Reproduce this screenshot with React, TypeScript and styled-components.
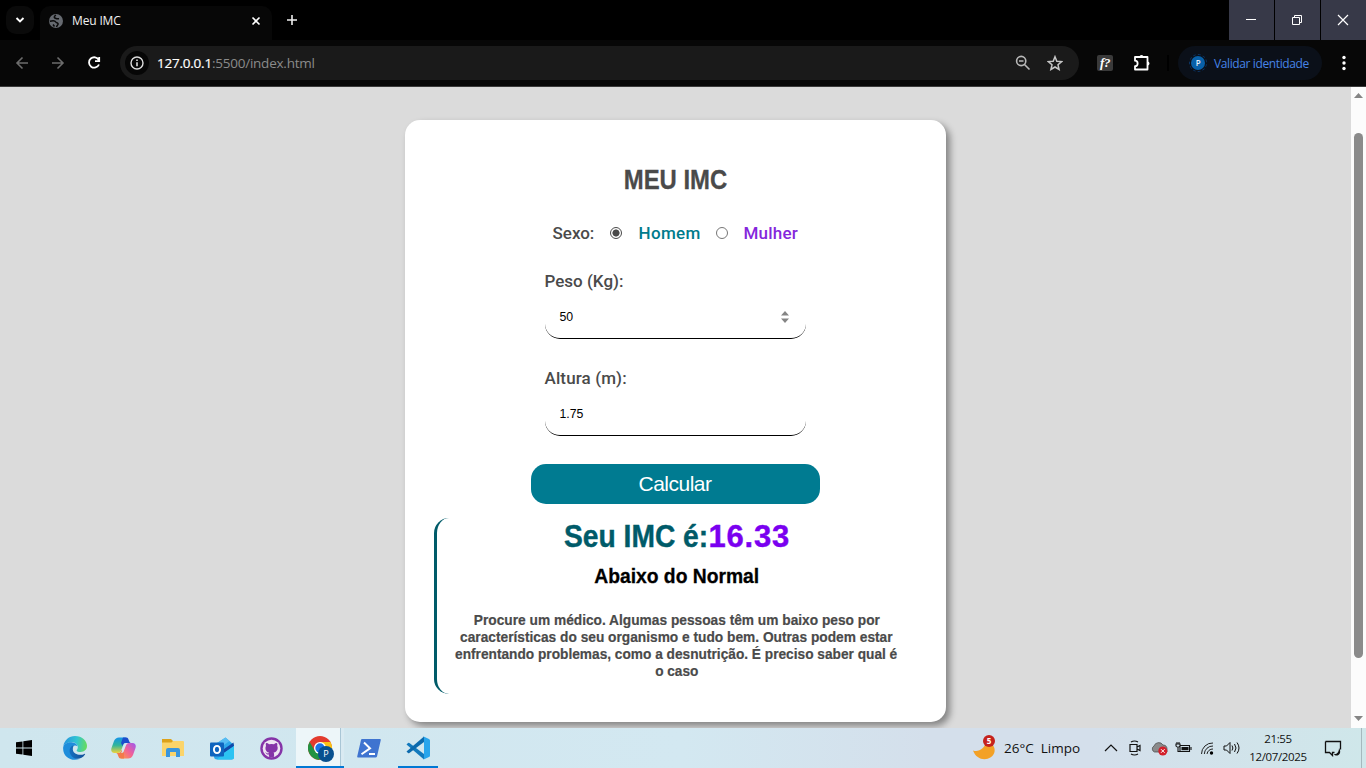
import React from "react";
import styled, { createGlobalStyle } from "styled-components";

const Global = createGlobalStyle`
  * { box-sizing: border-box; }
  body { margin: 0; overflow: hidden; font-family: "Open Sans", "Noto Sans", sans-serif; }
  svg { display: block; flex: none; }
`;

const Screen = styled.div`
  width: 1366px;
  height: 768px;
  display: flex;
  flex-direction: column;
  overflow: hidden;
`;

/* ---------- browser chrome ---------- */
const TabStrip = styled.div`
  height: 40px;
  flex: none;
  background: #000;
  display: flex;
  padding-left: 6px;
`;
const TabSearch = styled.div`
  width: 28px;
  height: 28px;
  margin-top: 6px;
  border-radius: 10px;
  background: #0a0a0a;
  display: flex;
  align-items: center;
  justify-content: center;
`;
const Tab = styled.div`
  width: 232px;
  height: 34px;
  margin: 6px 0 0 6px;
  border-radius: 10px 10px 0 0;
  background: #070707;
  display: flex;
  align-items: center;
  padding: 0 9px 5px 8px;
  color: #f0f0f0;
`;
const TabTitle = styled.span`
  flex: 1;
  margin-left: 8px;
  font-size: 12px;
  letter-spacing: -0.15px;
`;
const NewTab = styled.div`
  display: flex;
  align-items: center;
  padding-left: 14px;
`;
const WindowButtons = styled.div`
  margin-left: auto;
  display: flex;
  gap: 1px;
`;
const WindowButton = styled.div`
  width: 45px;
  height: 40px;
  background: #373948;
  display: flex;
  align-items: center;
  justify-content: center;
  padding-right: 2px;
`;
const Toolbar = styled.div`
  height: 47px;
  flex: none;
  background: #070707;
  border-bottom: 1px solid #3a3a3a;
  display: flex;
  align-items: center;
  padding: 0 14px;
`;
const NavIcons = styled.div`
  display: flex;
  gap: 20px;
  width: 106px;
`;
const AddressBar = styled.div`
  width: 959px;
  height: 34px;
  border-radius: 17px;
  background: #1a1a1a;
  display: flex;
  align-items: center;
  padding: 0 16px 0 5px;
`;
const SiteInfo = styled.div`
  width: 24px;
  height: 24px;
  border-radius: 50%;
  background: #060606;
  display: flex;
  align-items: center;
  justify-content: center;
`;
const Url = styled.span`
  flex: 1;
  margin-left: 8px;
  font-size: 13.5px;
  letter-spacing: -0.23px;
  color: #8b8b8b;
`;
const Host = styled.span`
  color: #fff;
  -webkit-text-stroke: 0.2px #fff;
`;
const Extension = styled.div`
  width: 16px;
  height: 16px;
  margin-left: 18px;
  border-radius: 2px;
  background: #3a3a3a;
  color: #fff;
  font: italic bold 13px/15px "Liberation Serif", serif;
  text-align: center;
  letter-spacing: -0.5px;
`;
const Divider = styled.div`
  width: 2px;
  height: 16px;
  margin: 0 9px 0 16px;
  background: #000;
`;
const Profile = styled.div`
  width: 144px;
  height: 34px;
  border-radius: 17px;
  background: #0b1019;
  display: flex;
  align-items: center;
  padding-left: 11px;
  color: #4684e8;
  font-size: 12px;
  letter-spacing: -0.38px;
  white-space: nowrap;
`;
const Avatar = styled.div`
  width: 18px;
  height: 18px;
  margin-right: 7px;
  border: 1px dashed #0b3668;
  border-radius: 50%;
  padding: 1px;
`;
const AvatarLetter = styled.div`
  width: 14px;
  height: 14px;
  border-radius: 50%;
  background: #0860a8;
  color: #e4eefa;
  font-size: 8px;
  font-weight: 600;
  line-height: 14px;
  text-align: center;
`;

/* ---------- page ---------- */
const Viewport = styled.div`
  height: 641px;
  flex: none;
  display: flex;
  overflow: hidden;
`;
const Page = styled.main`
  width: 1351px;
  background: #dbdbdb;
  display: flex;
  justify-content: center;
  align-items: flex-start;
  padding-top: 33px;
  overflow: hidden;
`;
const Card = styled.section`
  width: 541px;
  height: 602px;
  border-radius: 15px;
  background: #fff;
  box-shadow: 4px 4px 7px rgba(0, 0, 0, 0.4);
  display: flex;
  flex-direction: column;
  align-items: center;
  padding: 45px 30px 0 29px;
  font-family: "Liberation Sans", Arial, sans-serif;
  color: #4a4a4a;
`;
const Fit = styled.span<{ $x: number }>`
  display: block;
  white-space: nowrap;
  transform: scaleX(${(p) => p.$x});
`;
const Title = styled.h1`
  margin: 0;
  font-size: 27px;
  line-height: 30px;
  -webkit-text-stroke: 0.3px #4a4a4a;
`;
const GenderRow = styled.div`
  height: 20px;
  margin: 28px 0 0;
  width: 245px;
  display: flex;
  align-items: center;
`;
const Label = styled.span<{ $w: number; $color?: string; $ls?: number }>`
  width: ${(p) => p.$w}px;
  flex: none;
  font: 500 17px/20px Roboto, sans-serif;
  letter-spacing: ${(p) => p.$ls ?? 0}px;
  color: ${(p) => p.$color ?? "#4a4a4a"};
  white-space: nowrap;
`;
const Radio = styled.span<{ $on?: boolean; $gap: number }>`
  width: 12px;
  height: 12px;
  flex: none;
  margin-right: ${(p) => p.$gap}px;
  border: 1px solid ${(p) => (p.$on ? "#4a4a4a" : "#767676")};
  border-radius: 50%;
  background: ${(p) => (p.$on ? "radial-gradient(circle, #4a4a4a 3.2px, #fff 3.9px)" : "#fff")};
`;
const Field = styled.div<{ $top: number }>`
  width: 261px;
  margin-top: ${(p) => p.$top}px;
  display: flex;
  flex-direction: column;
`;
const Input = styled.div`
  height: 43px;
  margin-top: 5px;
  border-bottom: 1px solid #000;
  border-radius: 15px;
  display: flex;
  align-items: center;
  justify-content: space-between;
  padding: 0 14px 0 15px;
  font-size: 12.3px;
  color: #000;
`;
const Submit = styled.div`
  width: 289px;
  height: 40px;
  margin-top: 28px;
  border-radius: 15px;
  background: #007b91;
  color: #fff;
  font-size: 21px;
  line-height: 40px;
  text-align: center;
  letter-spacing: -0.5px;
`;
const Result = styled.div`
  width: 482px;
  height: 176px;
  margin-top: 14px;
  border-left: 3px solid #005b69;
  border-radius: 15px;
  display: flex;
  flex-direction: column;
  align-items: center;
  font-weight: bold;
`;
const Score = styled.div`
  display: flex;
  width: 226px;
  height: 38px;
  font-size: 31px;
  line-height: 38px;
  color: #005b69;
`;
const ScoreLabel = styled.span`
  width: 145px;
  white-space: nowrap;
  -webkit-text-stroke: 0.4px #005b69;
  & > span { transform-origin: 0 50%; }
`;
const ScoreValue = styled.span`
  color: #7a00f0;
  letter-spacing: 0.8px;
  -webkit-text-stroke: 0.4px #7a00f0;
`;
const Category = styled.div`
  margin-top: 8px;
  font-size: 20.5px;
  line-height: 24px;
  color: #000;
  -webkit-text-stroke: 0.3px #000;
`;
const Advice = styled.div`
  margin-top: 23px;
  display: flex;
  flex-direction: column;
  align-items: center;
  font-size: 15px;
  line-height: 17px;
  -webkit-text-stroke: 0.2px #4a4a4a;
`;
const Scrollbar = styled.div`
  width: 15px;
  background: #fcfcfc;
  display: flex;
  flex-direction: column;
  align-items: center;
  padding: 6px 0;
`;
const Thumb = styled.div`
  width: 9px;
  height: 525px;
  margin: 35px 0 58px;
  border-radius: 5px;
  background: #8b8b8b;
`;

/* ---------- taskbar ---------- */
const Taskbar = styled.div`
  height: 40px;
  flex: none;
  background: linear-gradient(90deg, #cfe6ee 0%, #d3e8f1 50%, #d4dfeb 68%, #d4dfeb 80%, #cfe7ea 100%);
  display: flex;
  color: #111;
`;
const AppButton = styled.div<{ $state?: "active" | "open"; $w?: number }>`
  width: ${(p) => p.$w ?? 49}px;
  height: 40px;
  display: flex;
  align-items: center;
  justify-content: center;
  background: ${(p) => (p.$state === "active" ? "linear-gradient(90deg, #edf6f9 44px, #a9c6d6 44px, #a9c6d6 45px, #d9eaf2 45px)" : "transparent")};
  box-shadow: ${(p) => (p.$state ? "inset 0 -2px #0078d4" : "none")};
`;
const ChromeIcon = styled.div`
  position: relative;
`;
const ProfileBadge = styled.div`
  position: absolute;
  left: 10px;
  top: 10px;
  width: 16px;
  height: 16px;
  border-radius: 50%;
  background: #07508f;
  color: #fff;
  font-size: 9px;
  line-height: 16px;
  text-align: center;
`;
const Tray = styled.div`
  margin-left: auto;
  display: flex;
  align-items: center;
`;
const Weather = styled.div`
  position: relative;
  width: 31px;
  height: 30px;
`;
const WeatherBadge = styled.div`
  position: absolute;
  left: 10px;
  top: 2px;
  width: 12px;
  height: 12px;
  border-radius: 50%;
  background: #c5221c;
  color: #fff;
  font-size: 8px;
  font-weight: 700;
  line-height: 12px;
  text-align: center;
`;
const WeatherText = styled.div`
  width: 95px;
  font-size: 13.5px;
  letter-spacing: 0;
  white-space: pre;
`;
const TrayIcon = styled.div`
  width: 24px;
  display: flex;
  justify-content: center;
`;
const Clock = styled.div`
  width: 70px;
  text-align: center;
  font-size: 11.5px;
  line-height: 18px;
  letter-spacing: -0.35px;
`;
const Notifications = styled.div`
  width: 49px;
  height: 40px;
  display: flex;
  align-items: center;
  justify-content: center;
  padding-right: 8px;
  border-right: 1px solid #a5b9be;
  margin-right: 4px;
`;

const line = { fill: "none", stroke: "#ddd", strokeWidth: 1.6 };

const Edge = () => (
  <svg width="24" height="24" viewBox="0 0 24 24">
    <defs>
      <linearGradient id="eg" x1="0" y1="0.4" x2="1" y2="0.5"><stop offset="0" stopColor="#2593de" /><stop offset=".55" stopColor="#31c5d2" /><stop offset="1" stopColor="#67dc5c" /></linearGradient>
      <linearGradient id="eb" x1="0" y1="0" x2="1" y2="0"><stop offset="0" stopColor="#1670c0" /><stop offset="1" stopColor="#124f97" /></linearGradient>
    </defs>
    <path d="M.3 10C1.500 4 6 0 12 0c7 0 12 5 12 9.800 0 4-3 6.200-6.200 6.200-3 0-4.500-.9-4.100-1.800C16 12 15 6.500 9 6.200 5 6 2 7.500.3 10Z" fill="url(#eg)" />
    <path d="M.2 11C1 8 4.500 6 8.500 6.200c3.500.1 5.500 2 6 4-3-1.700-6.300.3-6.300 4.300 0 5 4 8.500 8.300 8.500C8 26-.8 20.500.2 11Z" fill="#1e8ddb" />
    <path d="M9.500 9.800C5.800 11.500 5.500 17 9 20.500c3.500 3.500 9.500 3.200 13-2 .4-.6 0-.9-.6-.6-4 2-11 .9-11.600-4.400-.1-1.500.2-2.700.9-4Z" fill="url(#eb)" />
  </svg>
);
const Copilot = () => (
  <svg width="25" height="22" viewBox="0 0 25 22">
    <defs>
      <linearGradient id="c1" x1="0" y1="0" x2="0" y2="1"><stop offset="0" stopColor="#1494e8" /><stop offset=".5" stopColor="#30b59b" /><stop offset="1" stopColor="#efd33b" /></linearGradient>
      <linearGradient id="c2" x1="1" y1="0" x2="0" y2="1"><stop offset="0" stopColor="#9c59ef" /><stop offset=".5" stopColor="#f0609a" /><stop offset="1" stopColor="#ff9b45" /></linearGradient>
    </defs>
    <path d="M8 .5h7l-4.500 12Q9.500 16 7 16H3.500C.5 16-.3 13.500.5 11L3 4Q4.500.5 8 .5Z" fill="url(#c1)" />
    <path d="M12 .5h3.500c2.500 0 2.200 5.500 4.500 5.500h-5.500c-2 0-2.500 1.500-3 3L10 6Z" fill="#1b4dcc" />
    <path d="M17 21.500h-7l4.500-12Q15.500 6 18 6h3.500c3 0 3.800 2.500 3 5L22 18q-1.500 3.500-5 3.500Z" fill="url(#c2)" />
    <path d="M13 21.500H9.500C7 21.500 7.300 16 5 16h2.500c2 0 2.500-1.500 3-3L13 16Z" fill="#f27a4b" />
    <path d="m13.800 7-3.600 9h1.300l3.600-9Z" fill="#d6e9f1" />
  </svg>
);
const Folder = () => (
  <svg width="22" height="20" viewBox="0 0 22 20">
    <path d="M0 1h9l2 2h10v5H0Z" fill="#dda21b" />
    <path d="M11 3h10q1 0 1 1v14H0V4.500h9.500Z" fill="#fbd46a" />
    <path d="M4 19v-7q0-2 2-2h10q2 0 2 2v7h-4v-5H8v5Z" fill="#3a96dd" />
  </svg>
);
const Outlook = () => (
  <svg width="24" height="23" viewBox="0 0 24 23">
    <path d="M4 8 15.500.5 24 8v12q0 2.500-2.500 2.500H7Q4 22.500 4 19.500Z" fill="#2ea8ea" />
    <path d="m5 7.500 10.500-7 4 3.500-11 8-4-2Z" fill="#57bdf3" />
    <path d="M14 12 23.500 5.500 24 9 13 17Z" fill="#1249a8" />
    <path d="m13 16.500 11-7.500v11q0 2.500-2.500 2.500H7Z" fill="#2cc3f2" />
    <rect y="5.500" width="14" height="14" rx="1" fill="#0f64be" />
    <ellipse cx="7" cy="12.500" rx="3.100" ry="3.600" fill="none" stroke="#fff" strokeWidth="1.900" />
  </svg>
);
const Github = () => (
  <svg width="23" height="23" viewBox="0 0 23 23">
    <circle cx="11.500" cy="11.500" r="11.200" fill="#8534a8" />
    <circle cx="11.500" cy="11.500" r="8.800" fill="#eee5f2" />
    <path d="M6 6q2 0 3 1.200a10 10 0 0 1 5 0Q15 6 17 6q.7 1.500.2 3c1 1.500.8 6-3.700 6.500.6.600.6 1.200.6 4.300q-2.600.800-5.200 0v-2.300c-2 .5-2.500-.9-3-1.600l-.9-.7c1.300-.2 1.700 1.400 3 1.300q.7 0 1-1C5.200 15 5 10.500 6 9q-.5-1.500 0-3" fill="#8534a8" />
  </svg>
);
const Chrome = () => (
  <svg width="24" height="24" viewBox="0 0 24 24">
    <circle cx="12" cy="12" r="12" fill="#e33b2e" />
    <path d="M12 6h10.400A12 12 0 0 1 12 24l5-9Z" fill="#fbc116" />
    <path d="M1.600 6 7 15l5 3 3-1-4 7A12 12 0 0 1 1.600 6" fill="#229342" />
    <circle cx="12" cy="12" r="6" fill="#fff" />
    <circle cx="12" cy="12" r="4.700" fill="#1a73e8" />
  </svg>
);
const PowerShell = () => (
  <svg width="24" height="19" viewBox="0 0 24 19">
    <path d="M5 0h18q1 0 .8 1L20 17.500q-.3 1-1.500 1H1q-1 0-.8-1L4 1Q4.200 0 5 0" fill="#3f74d0" />
    <path d="m7 3.500 6 5.800-8.500 6M12 15h6" fill="none" stroke="#fff" strokeWidth="2" />
  </svg>
);
const VsCode = () => (
  <svg width="24" height="24" viewBox="0 0 24 24">
    <path d="M.5 8.500 2 7q.7-.4 1.400 0L18 18v5.500Z" fill="#1279bd" />
    <path d="M.5 15.500 2 17q.7.400 1.400 0L18 6V.5Z" fill="#0c6aad" />
    <path d="m17 .3 6 2.700q1 .5 1 1.500v15q0 1-1 1.500l-6 2.700q1-.2 1-2V2.300q0-1.500-1-2" fill="#29a5ec" />
  </svg>
);

const App: React.FC = () => (
  <Screen>
    <Global />
    <TabStrip>
      <TabSearch>
        <svg width="10" height="8" viewBox="0 0 10 8"><path d="m1.500 2 3.500 3.500L8.500 2" fill="none" stroke="#fff" strokeWidth="1.900" /></svg>
      </TabSearch>
      <Tab>
        <svg width="16" height="16" viewBox="0 0 16 16">
          <circle cx="8" cy="8" r="7" fill="#666a70" />
          <path d="M8 2.200C5.500 3.500 5.800 5 8 5.500c1.200.4 2 .2 3 .3M1.800 8.300C4 7.600 7 7.500 7.800 9c.5 1 2 .6 2.300 1.800.3 1.200-1.300 1.500-1.600 3.200M5 11.500l1.500 2" fill="none" stroke="#0a0a0a" strokeWidth="1.500" />
        </svg>
        <TabTitle>Meu IMC</TabTitle>
        <svg width="14" height="14" viewBox="0 0 14 14"><path d="m3.500 3.500 7 7m0-7-7 7" fill="none" stroke="#fff" strokeWidth="1.600" /></svg>
      </Tab>
      <NewTab>
        <svg width="12" height="12" viewBox="0 0 12 12"><path d="M6 1v10M1 6h10" stroke="#eee" strokeWidth="1.600" /></svg>
      </NewTab>
      <WindowButtons>
        <WindowButton><svg width="12" height="12" viewBox="0 0 12 12"><path d="M1 5.500h10" stroke="#fff" /></svg></WindowButton>
        <WindowButton><svg width="12" height="12" viewBox="0 0 12 12"><path d="M1.500 3.500h7v7h-7zM3.500 3.500v-2h7v7h-2" fill="none" stroke="#fff" /></svg></WindowButton>
        <WindowButton><svg width="12" height="12" viewBox="0 0 12 12"><path d="m1 1 10 10M11 1 1 11" stroke="#fff" strokeWidth="1.200" /></svg></WindowButton>
      </WindowButtons>
    </TabStrip>
    <Toolbar>
      <NavIcons>
        <svg width="16" height="16" viewBox="0 0 16 16"><path d="M14 8H3m5.500-5.500L3 8l5.500 5.500" {...line} stroke="#6c6c6c" /></svg>
        <svg width="16" height="16" viewBox="0 0 16 16"><path d="M2 8h11M7.500 2.500 13 8l-5.500 5.500" {...line} stroke="#6c6c6c" /></svg>
        <svg width="16" height="16" viewBox="0 0 16 16"><path d="M12.800 5A5.200 5.200 0 1 0 13 9.500M13.200 2v4.200H9" {...line} stroke="#fff" strokeWidth="1.800" /></svg>
      </NavIcons>
      <AddressBar>
        <SiteInfo>
          <svg width="14" height="14" viewBox="0 0 14 14"><circle cx="7" cy="7" r="6" {...line} strokeWidth="1.400" /><path d="M7 6.200v4M7 3.500V5" {...line} /></svg>
        </SiteInfo>
        <Url><Host>127.0.0.1</Host>:5500/index.html</Url>
        <svg width="16" height="16" viewBox="0 0 16 16"><circle cx="6.200" cy="6" r="4.600" {...line} stroke="#b8b8b8" /><path d="M4 6h4.500M9.500 9.500l5 5" {...line} stroke="#b8b8b8" /></svg>
        <svg width="16" height="16" viewBox="0 0 16 16" style={{ marginLeft: 16 }}><path d="m8 1.700 1.800 4.500 4.900.4-3.700 3.200 1.100 4.700L8 12l-4.100 2.500L5 9.800 1.300 6.600l4.900-.4Z" {...line} stroke="#c6c6c6" strokeWidth="1.500" /></svg>
      </AddressBar>
      <Extension>f?</Extension>
      <svg width="18" height="18" viewBox="0 0 18 18" style={{ marginLeft: 20 }}>
        <path d="M2 3h12.500v12.500H2v-3.300c3.500 0 3.500-5.500 0-5.500Z" {...line} stroke="#fff" strokeWidth="1.800" strokeLinejoin="round" />
        <path d="M6.500 3a2 2 0 0 1 4 0ZM14.500 7.500a2 2 0 0 1 0 4Z" fill="#fff" />
      </svg>
      <Divider />
      <Profile>
        <Avatar><AvatarLetter>P</AvatarLetter></Avatar>
        Validar identidade
      </Profile>
      <svg width="4" height="16" viewBox="0 0 4 16" style={{ marginLeft: 20 }}><g fill="#fff"><circle cx="2" cy="2.500" r="1.700" /><circle cx="2" cy="8" r="1.700" /><circle cx="2" cy="13.500" r="1.700" /></g></svg>
    </Toolbar>

    <Viewport>
      <Page>
        <Card>
          <Title><Fit $x={0.885}>MEU IMC</Fit></Title>
          <GenderRow>
            <Label $w={57}>Sexo:</Label>
            <Radio $on $gap={17} />
            <Label $w={77} $color="#007b8c" $ls={0.35}>Homem</Label>
            <Radio $gap={16} />
            <Label $w={54} $color="#8526dc" $ls={0.2}>Mulher</Label>
          </GenderRow>
          <Field $top={28}>
            <Label $w={200}>Peso (Kg):</Label>
            <Input>
              50
              <svg width="14" height="14" viewBox="0 0 14 14"><path d="M3 5.500 7 1l4 4.500ZM3 8.500 7 13l4-4.500Z" fill="#858585" /></svg>
            </Input>
          </Field>
          <Field $top={29}>
            <Label $w={200} $ls={0.12}>Altura (m):</Label>
            <Input>1.75</Input>
          </Field>
          <Submit>Calcular</Submit>
          <Result>
            <Score>
              <ScoreLabel><Fit $x={0.91}>Seu IMC é:</Fit></ScoreLabel>
              <ScoreValue>16.33</ScoreValue>
            </Score>
            <Category><Fit $x={0.94}>Abaixo do Normal</Fit></Category>
            <Advice>
              <Fit $x={0.915}>Procure um médico. Algumas pessoas têm um baixo peso por</Fit>
              <Fit $x={0.915}>características do seu organismo e tudo bem. Outras podem estar</Fit>
              <Fit $x={0.913}>enfrentando problemas, como a desnutrição. É preciso saber qual é</Fit>
              <Fit $x={0.91}>o caso</Fit>
            </Advice>
          </Result>
        </Card>
      </Page>
      <Scrollbar>
        <svg width="9" height="5" viewBox="0 0 9 5"><path d="M0 5 4.500 0 9 5Z" fill="#858585" /></svg>
        <Thumb />
        <svg width="9" height="5" viewBox="0 0 9 5"><path d="M0 0 4.500 5 9 0Z" fill="#858585" /></svg>
      </Scrollbar>
    </Viewport>

    <Taskbar>
      <AppButton $w={50}>
        <svg width="16" height="16" viewBox="0 0 16 16" style={{ marginRight: 2 }}><path d="M0 2.300 6.500 1.400v6.200H0ZM7.300 1.300 16 0v7.600H7.300ZM0 8.400h6.500v6.200L0 13.700ZM7.300 8.400H16V16l-8.700-1.300Z" fill="#000" /></svg>
      </AppButton>
      <AppButton><Edge /></AppButton>
      <AppButton><Copilot /></AppButton>
      <AppButton><Folder /></AppButton>
      <AppButton><Outlook /></AppButton>
      <AppButton $w={50}><Github /></AppButton>
      <AppButton $state="active" $w={48}><ChromeIcon><Chrome /><ProfileBadge>P</ProfileBadge></ChromeIcon></AppButton>
      <AppButton $w={50}><PowerShell /></AppButton>
      <AppButton $w={4} />
      <AppButton $state="open" $w={40}><VsCode /></AppButton>
      <Tray>
        <Weather>
          <svg width="24" height="30" viewBox="0 0 24 30"><path d="M0 17.500c6 2 11-2 13.500-8.500 6 1 9 5 8 10-2 8.500-17 11-21.500-1.500" fill="#f3a126" /></svg>
          <WeatherBadge>5</WeatherBadge>
        </Weather>
        <WeatherText>{"26°C  Limpo"}</WeatherText>
        <TrayIcon><svg width="14" height="14" viewBox="0 0 14 14"><path d="m1 10 6-6 6 6" fill="none" stroke="#111" strokeWidth="1.200" /></svg></TrayIcon>
        <TrayIcon><svg width="12" height="16" viewBox="0 0 12 16"><path d="M1 4.500h7v7H1zM8 7l3-1.500v5L8 9M2 2q3.500-2 7 0M2 14q3.500 2 7 0" fill="none" stroke="#111" strokeWidth="1.200" /></svg></TrayIcon>
        <TrayIcon><svg width="17" height="15" viewBox="0 0 17 15"><path d="M3.500 11A3.300 3.300 0 0 1 3 5a5 5 0 0 1 9-1c3 0 4 2 4 4v3Z" fill="#8b8b8b" stroke="#444" strokeWidth=".7" /><circle cx="11.800" cy="10" r="4.500" fill="#d3202b" /><path d="m10 8.200 3.600 3.600m0-3.600L10 11.800" stroke="#fff" /></svg></TrayIcon>
        <TrayIcon><svg width="17" height="14" viewBox="0 0 17 14"><path d="M5 4.500h9.500v6H5zM3 6.500v4h2M1 3h4v2q-2 2.500-4 0ZM2 1v2m2-2v2M16 6v3" fill="none" stroke="#111" strokeWidth="1.100" /><path d="M6.500 6h7v3.200h-7z" fill="#111" /></svg></TrayIcon>
        <TrayIcon><svg width="14" height="14" viewBox="0 0 14 14"><path d="M1.500 13A11 11 0 0 1 13 2M4.300 13A8.400 8.400 0 0 1 13 5M7 13a5.800 5.800 0 0 1 6-5" fill="none" stroke="#222" strokeWidth="1" /><circle cx="11.500" cy="12" r="1.700" /></svg></TrayIcon>
        <TrayIcon><svg width="17" height="14" viewBox="0 0 17 14"><path d="M1 5h2.500L7 1.500v11L3.500 9H1ZM9 4.500q1.800 2.500 0 5M11.500 3q3 4 0 8M14 1.500q4 5.500 0 11" fill="none" stroke="#111" /></svg></TrayIcon>
        <Clock><div>21:55</div><div>12/07/2025</div></Clock>
        <Notifications>
          <svg width="18" height="17" viewBox="0 0 18 17"><path d="M1.500 1.500h15v8M1.500 1.500v11h4l3 3v-3h2" fill="none" stroke="#111" strokeWidth="1.300" /><path d="M15 8c2 3 1.500 6.500-1.500 7.500-1.500.3-3-.3-3.500-1.500 3 .5 5-2 5-6" fill="#111" /></svg>
        </Notifications>
      </Tray>
    </Taskbar>
  </Screen>
);

export default App;
